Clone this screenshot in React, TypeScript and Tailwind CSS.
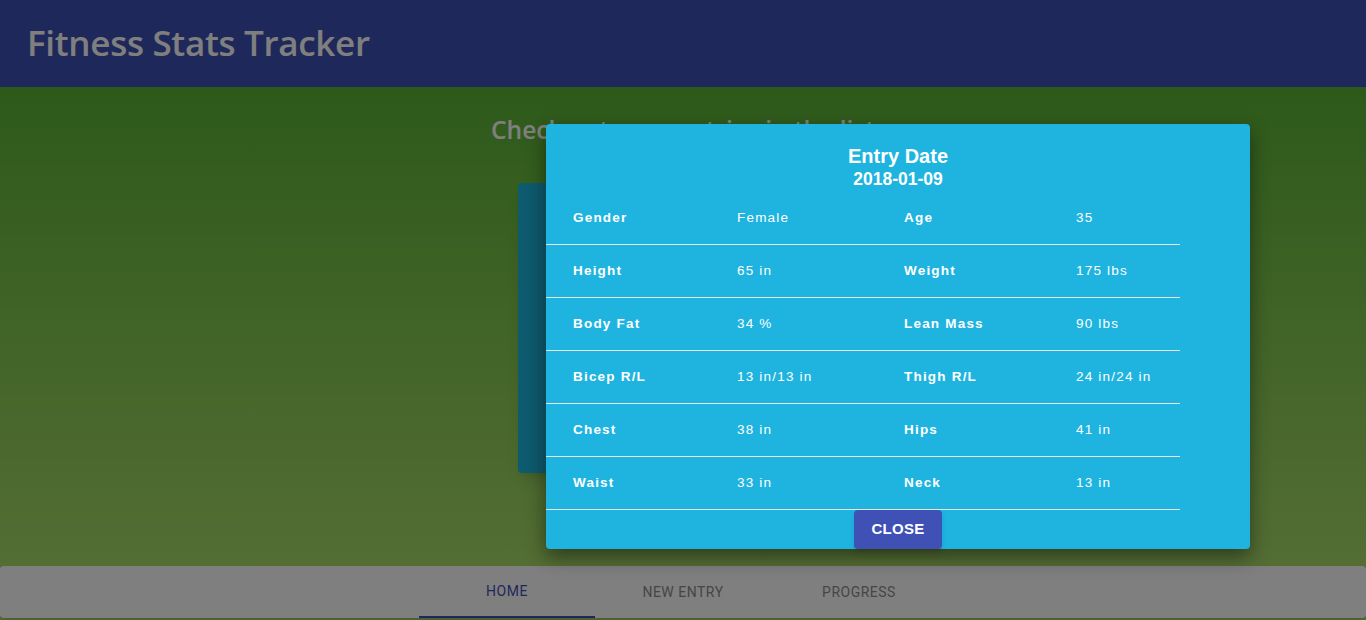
import React from "react";

const rows = [
    ["Gender", "Female", "Age", "35"],
    ["Height", "65 in", "Weight", "175 lbs"],
    ["Body Fat", "34 %", "Lean Mass", "90 lbs"],
    ["Bicep R/L", "13 in/13 in", "Thigh R/L", "24 in/24 in"],
    ["Chest", "38 in", "Hips", "41 in"],
    ["Waist", "33 in", "Neck", "13 in"],
];

const tabs = ["Home", "New Entry", "Progress"];

export default function App() {
    return (
        <div className="relative h-[620px] w-full overflow-hidden flex flex-col bg-[#a8dc68]">
            {/* Header */}
            <header className="h-[87px] shrink-0 bg-[#3f51b5] flex items-center px-[27px]">
                <h1 className="text-white text-[35px] font-semibold tracking-[-0.3px] font-['Open_Sans',sans-serif]">
                    Fitness Stats Tracker
                </h1>
            </header>

            {/* Main */}
            <main className="flex-1 bg-gradient-to-b from-[#5ab434] to-[#a8dc68] flex flex-col items-center pt-[25px]">
                <h2 className="text-white text-[24.5px] font-semibold font-['Open_Sans',sans-serif]">
                    Check out your entries in the list
                </h2>
                <div className="mt-[34px] w-[330px] h-[290px] rounded bg-[#1cb4dc] shadow-lg" />
            </main>

            {/* Bottom nav */}
            <nav className="h-[52px] shrink-0 mb-[2px] bg-white rounded shadow-md flex justify-center font-['Roboto',sans-serif]">
                {tabs.map((t, i) => (
                    <div
                        key={t}
                        className={`w-[176px] flex items-center justify-center text-sm uppercase tracking-[0.5px] ${
                            i === 0 ? "text-[#3f51b5] border-b-2 border-[#3f51b5]" : "text-[#8c8c8c]"
                        }`}
                    >
                        {t}
                    </div>
                ))}
            </nav>

            {/* Backdrop */}
            <div className="absolute inset-0 bg-black/50" />

            {/* Dialog */}
            <div className="absolute left-[546px] top-[124px] w-[704px] h-[425px] bg-[#1eb4df] rounded shadow-[0_8px_20px_rgba(0,0,0,0.45)] text-white font-['Liberation_Sans',Arial,sans-serif] flex flex-col">
                <div className="pt-[21px] text-center font-bold">
                    <div className="text-[20px] leading-[23px]">Entry Date</div>
                    <div className="text-[17.5px] leading-[22px]">2018-01-09</div>
                </div>
                <div className="w-[634px] mt-[2px]">
                    {rows.map((r) => (
                        <div
                            key={r[0]}
                            className="grid grid-cols-[191px_167px_172px_104px] h-[53px] items-center border-b border-[#e6e6e6] text-[13.5px] tracking-[1.2px]"
                        >
                            <span className="pl-[27px] font-bold">{r[0]}</span>
                            <span>{r[1]}</span>
                            <span className="font-bold">{r[2]}</span>
                            <span className="whitespace-nowrap">{r[3]}</span>
                        </div>
                    ))}
                </div>
                <div className="flex justify-center">
                    <button className="w-[88px] h-[39px] rounded bg-[#3f51b5] text-white text-[15px] font-bold tracking-[0.3px] shadow-md">
                        CLOSE
                    </button>
                </div>
            </div>
        </div>
    );
}
